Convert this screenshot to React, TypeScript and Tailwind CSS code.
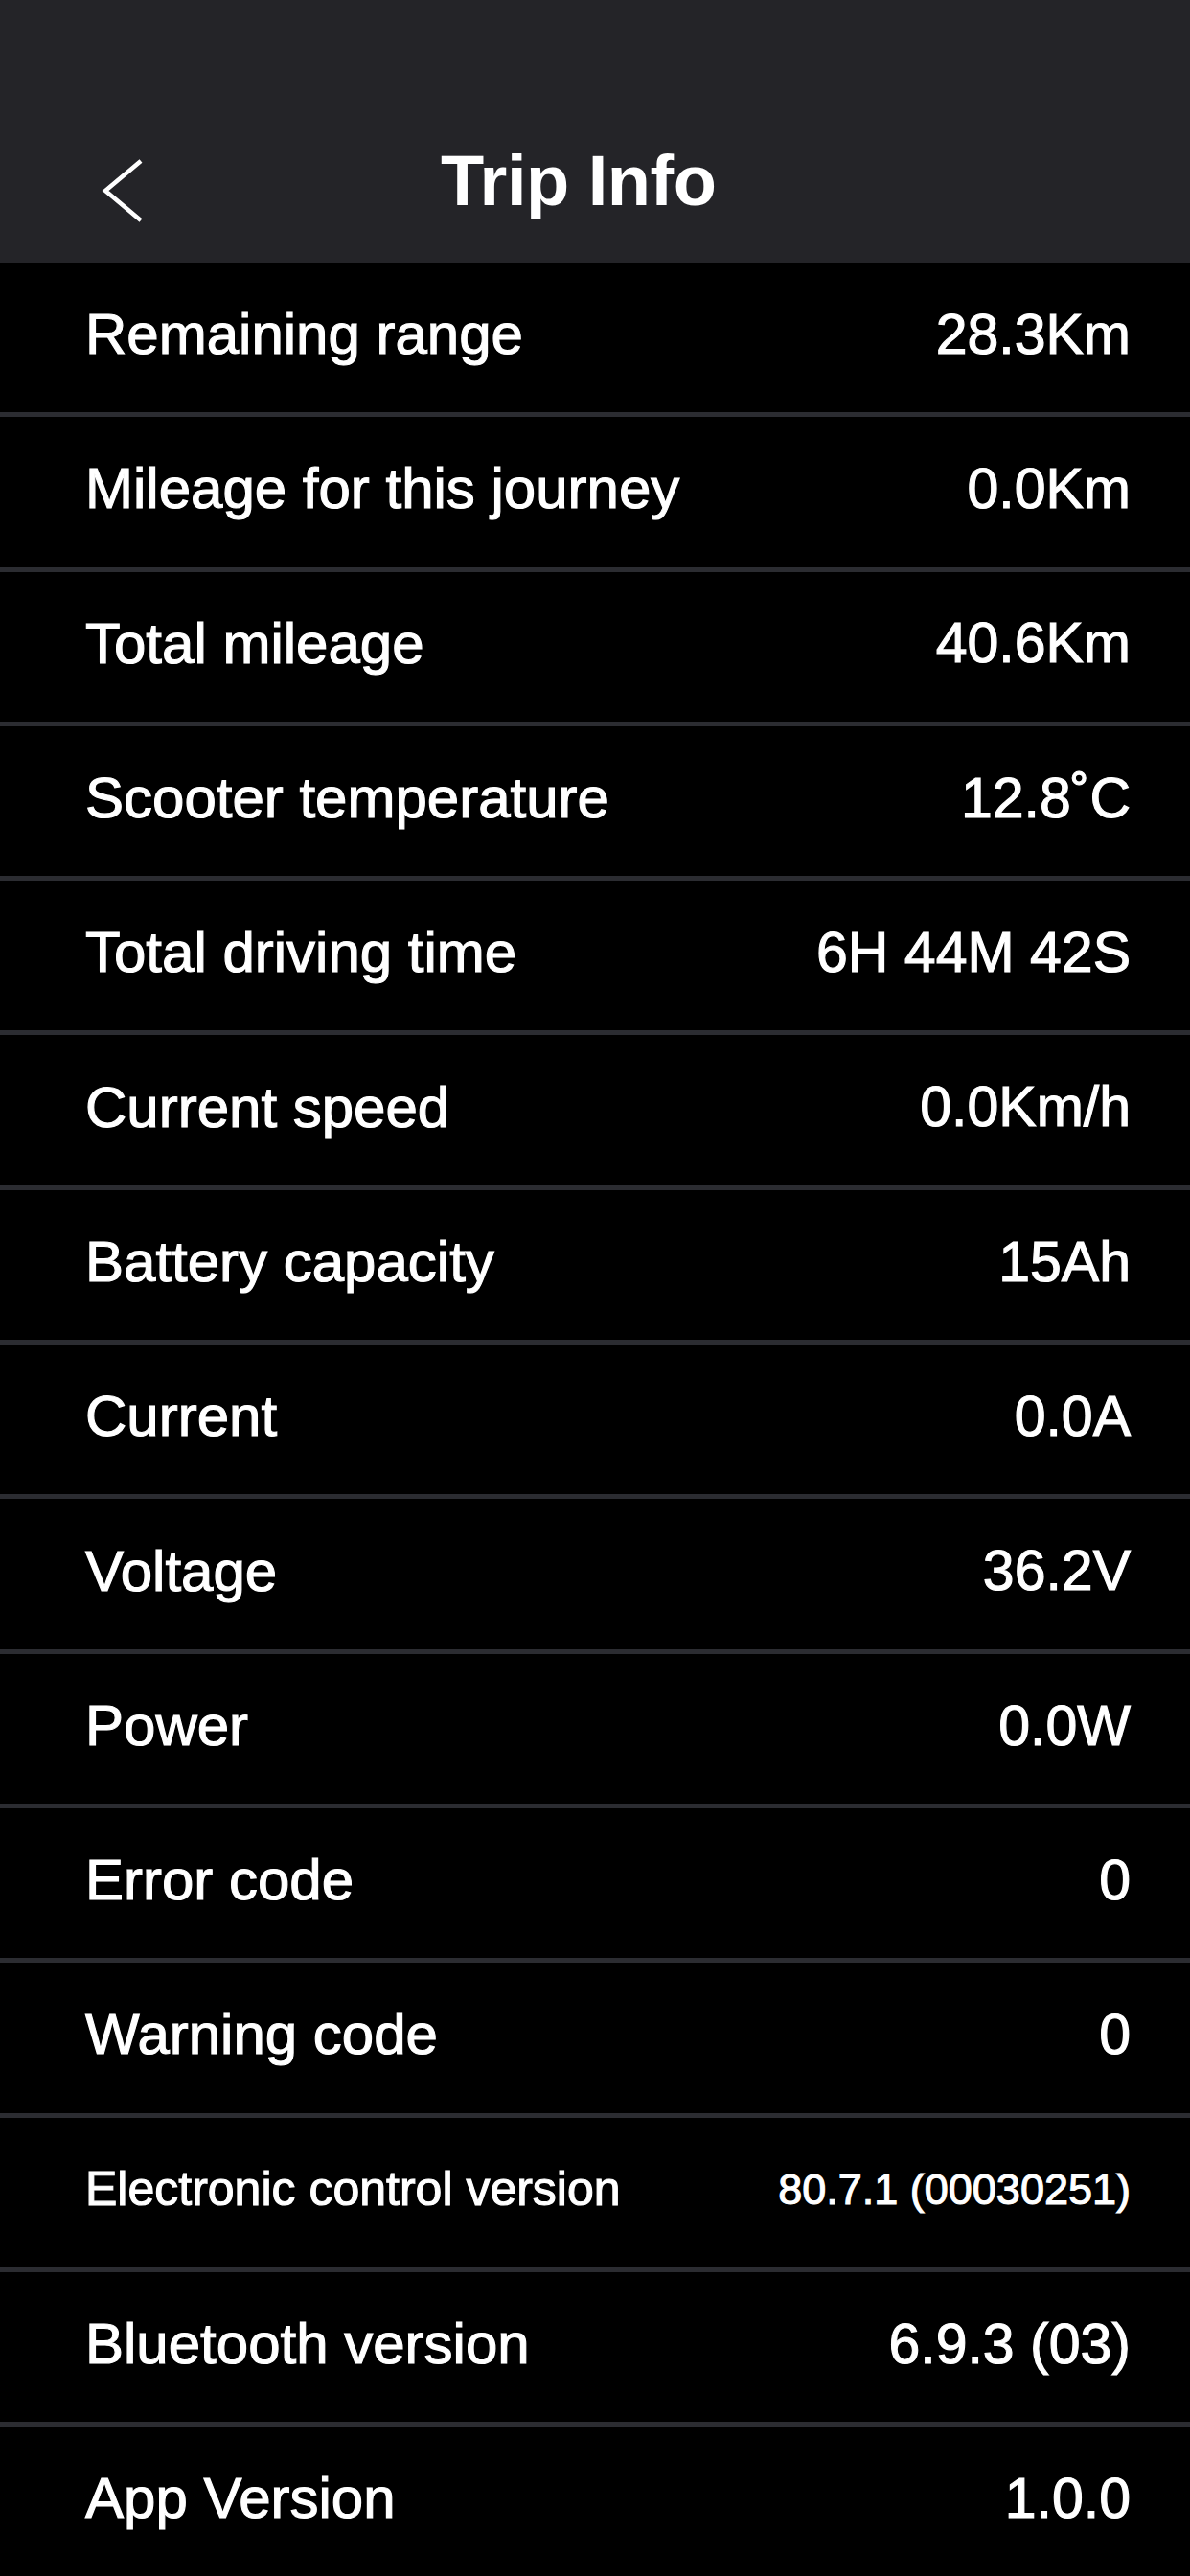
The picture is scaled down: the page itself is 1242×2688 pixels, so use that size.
const rows = [
    {label: "Remaining range", value: "28.3Km"},
    {label: "Mileage for this journey", value: "0.0Km"},
    {label: "Total mileage", value: "40.6Km"},
    {label: "Scooter temperature", value: "12.8˚C"},
    {label: "Total driving time", value: "6H 44M 42S"},
    {label: "Current speed", value: "0.0Km/h"},
    {label: "Battery capacity", value: "15Ah"},
    {label: "Current", value: "0.0A"},
    {label: "Voltage", value: "36.2V"},
    {label: "Power", value: "0.0W"},
    {label: "Error code", value: "0"},
    {label: "Warning code", value: "0"},
    {label: "Electronic control version", value: "80.7.1 (00030251)", small: true},
    {label: "Bluetooth version", value: "6.9.3 (03)"},
    {label: "App Version", value: "1.0.0"},
];

function BackIcon() {
    return (
        <svg width="44" height="66" viewBox="0 0 44 66" fill="none">
            <polyline points="41,2 4,33 41,64" stroke="white" strokeWidth="4.5" strokeLinejoin="miter"/>
        </svg>
    );
}

export default function App() {
    return (
        <div className="w-[1242px] h-[2688px] bg-black overflow-hidden text-white font-['Liberation_Sans',Arial,sans-serif]">
            <header className="h-[274px] bg-[#242428] flex flex-col justify-end pb-[10px]">
                <div className="h-[130px] flex items-center pl-[106px]">
                    <BackIcon/>
                    <h1 className="ml-[310px] mb-[20px] text-[74px] font-bold leading-none tracking-[-0.5px]">Trip Info</h1>
                </div>
            </header>
            <div className="flex flex-col">
                {rows.map((row, i) => (
                    <div key={i}>
                        {i > 0 && <div className="h-[5px] bg-[#2b2c31]"/>}
                        <div
                            className="h-[156.3px] flex items-center justify-between pl-[89px] pr-[62px] pb-[6px] [-webkit-text-stroke:1.1px_#fff]">
                            <span className={row.small ? "text-[50px]" : "text-[60px]"}>{row.label}</span>
                            <span className={row.small ? "text-[45px]" : "text-[59px]"}>{row.value}</span>
                        </div>
                    </div>
                ))}
            </div>
        </div>
    );
}
